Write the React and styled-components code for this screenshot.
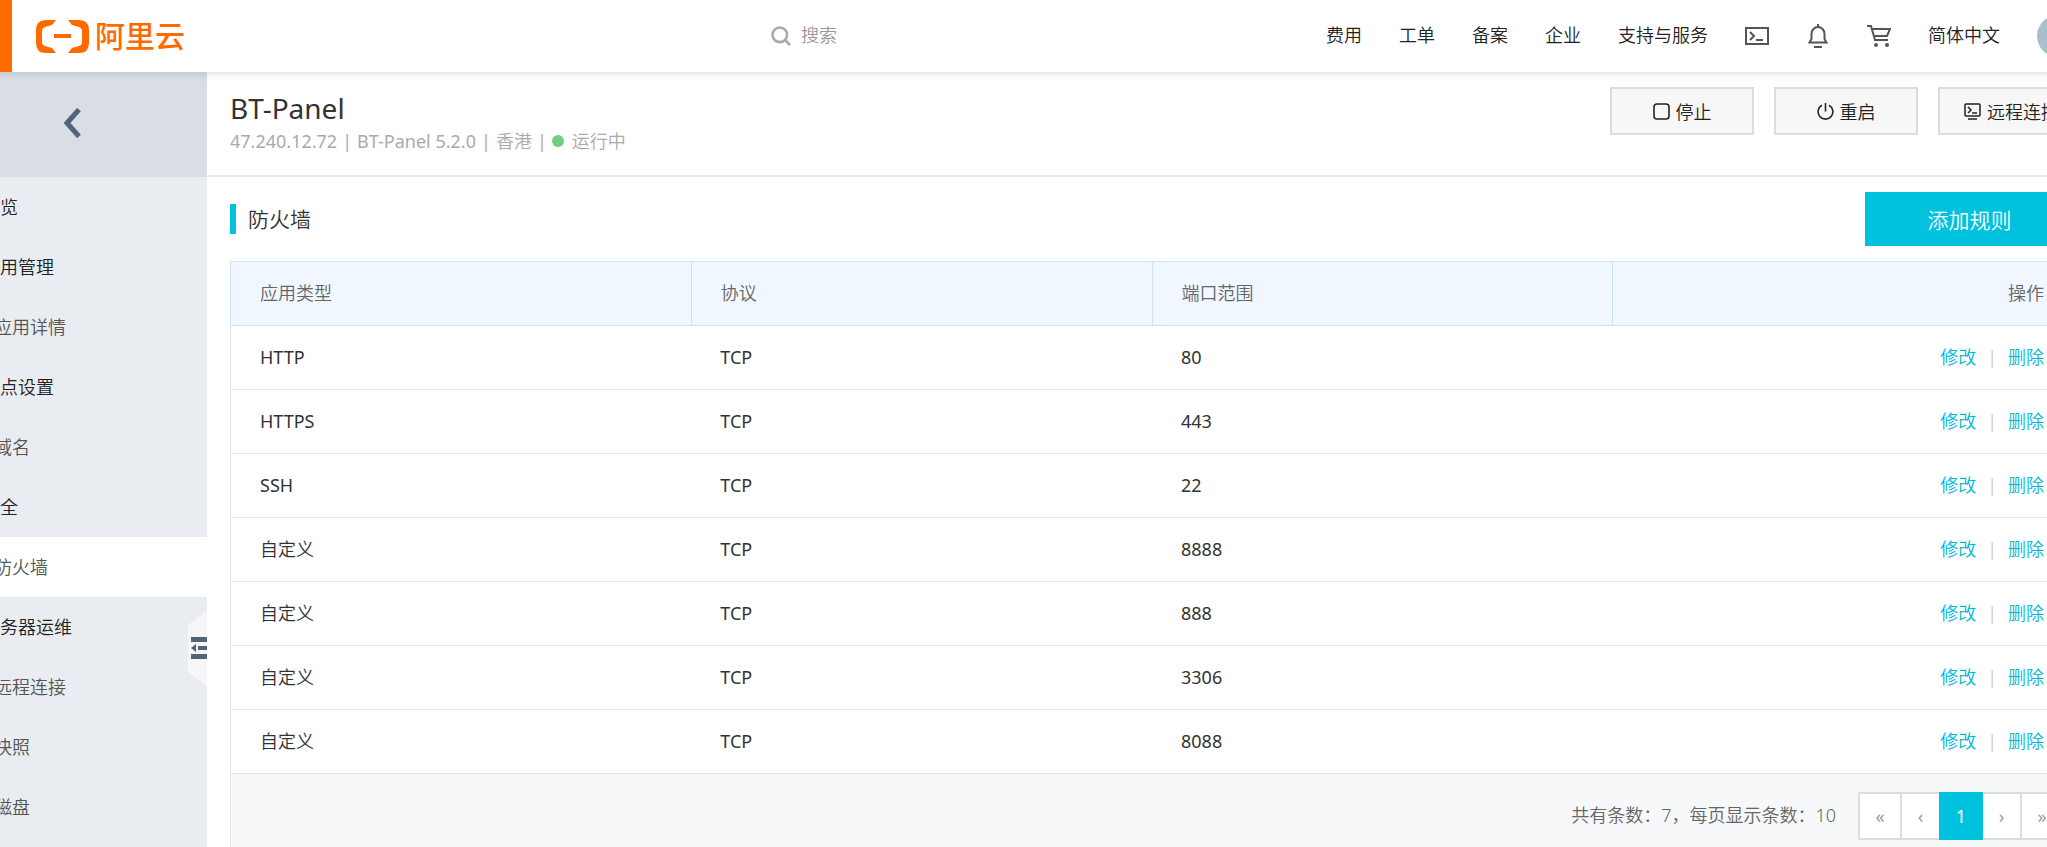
import React from "react";
import styled, { createGlobalStyle } from "styled-components";

const Global = createGlobalStyle`
  * { box-sizing: border-box; }
  html, body { margin: 0; background: #fff; overflow-x: hidden; }
  body, button, input { font-family: "Noto Sans", "Noto Sans CJK SC", sans-serif; font-size: 18px; font-weight: 350; }
  body { color: #333; line-height: 24px; height: 100vh; overflow: hidden; }
  a { color: inherit; text-decoration: none; }
  ul { list-style: none; margin: 0; padding: 0; }
  button { cursor: pointer; }
  svg { display: block; flex: none; }
`;

const Shell = styled.div`
  display: flex;
  flex-direction: column;
  min-height: 100vh;
  margin: 0 -50px 0 -48px;
`;
const TopBar = styled.header`
  display: flex;
  align-items: center;
  height: 72px;
  padding-right: 18px;
  background: #fff;
  box-shadow: 0 1px 8px rgba(0, 0, 0, 0.15);
  z-index: 2;
`;
const MenuButton = styled.button`
  width: 60px;
  height: 72px;
  border: 0;
  background: #ff6a00;
`;
const Logo = styled.a`
  display: flex;
  align-items: center;
  gap: 6px;
  margin-left: 24px;
  color: #ff6a00;
  font-size: 30px;
  font-weight: 500;
  line-height: 36px;
`;
const Search = styled.label`
  display: flex;
  flex: 1;
  align-items: center;
  gap: 10px;
  margin-left: 586px;
  color: #999;
`;
const SearchInput = styled.input`
  width: 200px;
  padding: 0 0 2px;
  border: 0;
  outline: 0;
  background: none;
  &::placeholder { color: #999; opacity: 1; }
`;
const TopNav = styled.nav`
  display: flex;
  align-items: center;
  gap: 37px;
  color: #222;
`;
const NavLink = styled.a`
  padding-bottom: 2px;
`;
const IconButton = styled.button`
  display: flex;
  padding: 0;
  border: 0;
  background: none;
  color: #555;
`;
const Avatar = styled.span`
  width: 42px;
  height: 42px;
  border-radius: 50%;
  background: #a7c0cc;
`;
const Body = styled.div`
  display: flex;
  flex: 1;
`;
const Sidebar = styled.aside`
  position: relative;
  flex: none;
  width: 255px;
  background: #e9edf2;
`;
const BackButton = styled.button`
  display: flex;
  align-items: center;
  width: 100%;
  height: 105px;
  padding: 0 0 4px 111px;
  border: 0;
  background: #d9dde4;
  color: #546478;
`;
const SideLink = styled.a`
  display: block;
  height: 60px;
  padding-left: ${(p) => (p.$child ? 42 : 30)}px;
  line-height: 60px;
  color: ${(p) => (p.$child ? "#555" : "#222")};
  background: ${(p) => (p.$active ? "#fff" : "transparent")};
`;
const Collapse = styled.button`
  position: absolute;
  top: 539px;
  right: 0;
  padding: 0;
  border: 0;
  background: none;
`;
const Main = styled.main`
  display: flex;
  flex: 1;
  flex-direction: column;
  min-width: 0;
`;
const PageHead = styled.div`
  display: flex;
  justify-content: space-between;
  height: 105px;
  padding: 15px 12px 0 23px;
  border-bottom: 2px solid #e4e8ec;
`;
const Title = styled.h1`
  margin: 0;
  font-size: 28px;
  font-weight: 400;
  line-height: 42px;
`;
const Meta = styled.div`
  display: flex;
  align-items: center;
  gap: 5px;
  color: #aaa;
  font-weight: 400;
`;
const Status = styled.span`
  display: flex;
  align-items: center;
  gap: 8px;
  font-weight: 350;
`;
const Dot = styled.i`
  width: 12px;
  height: 12px;
  border-radius: 50%;
  background: #6fcf7f;
`;
const Actions = styled.div`
  display: flex;
  gap: 20px;
`;
const ActionButton = styled.button`
  display: flex;
  align-items: center;
  justify-content: center;
  gap: 6px;
  min-width: 144px;
  height: 48px;
  padding: 0 24px;
  border: 2px solid #ddd;
  background: #f7f7f7;
  color: #222;
`;
const Section = styled.section`
  display: flex;
  flex: 1;
  flex-direction: column;
  padding: 15px 23px 0;
`;
const SectionHead = styled.div`
  display: flex;
  align-items: center;
  justify-content: space-between;
  margin-bottom: 15px;
`;
const SectionTitle = styled.h2`
  margin: 0;
  padding-left: 12px;
  border-left: 6px solid #00c1de;
  font-size: 21px;
  font-weight: 350;
  line-height: 30px;
`;
const AddButton = styled.button`
  width: 209px;
  height: 54px;
  border: 0;
  background: #00c1de;
  color: #fff;
  font-size: 21px;
`;
const Table = styled.table`
  width: 100%;
  table-layout: fixed;
  border-collapse: collapse;
`;
const Th = styled.th`
  height: 64px;
  padding: 0 29px 2px;
  border: 1px solid #cce3f9;
  background: #f0f7ff;
  color: #666;
  font-weight: 350;
  text-align: ${(p) => p.$align || "left"};
`;
const Td = styled.td`
  height: 64px;
  padding: 0 29px 2px;
  border-bottom: 1px solid #e1e5e9;
  font-weight: ${(p) => (p.$latin ? 400 : 350)};
  text-align: ${(p) => p.$align || "left"};
  &:first-child { border-left: 1px solid #e1e5e9; }
  &:last-child { border-right: 1px solid #e1e5e9; }
`;
const RowLink = styled.a`
  color: #00b8d8;
`;
const Divider = styled.span`
  margin: 0 11px;
  color: #bbb;
`;
const Footer = styled.div`
  display: flex;
  flex: 1;
  align-items: flex-start;
  justify-content: flex-end;
  gap: 24px;
  padding: 18px 9px 0 0;
  border: solid #e1e5e9;
  border-width: 0 1px;
  background: #f6f8fa;
  color: #666;
`;
const Summary = styled.span`
  line-height: 46px;
`;
const Pager = styled.div`
  display: flex;
`;
const PageButton = styled.button`
  position: relative;
  z-index: ${(p) => (p.$active ? 1 : 0)};
  width: ${(p) => (p.$wide ? 44 : 41)}px;
  height: 48px;
  padding: 0;
  margin-left: -2px;
  border: 2px solid ${(p) => (p.$active ? "#00c1de" : "#ddd")};
  background: ${(p) => (p.$active ? "#00c1de" : "#fff")};
  color: ${(p) => (p.$active ? "#fff" : "#999")};
  font-weight: 400;
`;

const LogoMark = () => (
  <svg width="53" height="33" viewBox="0 0 53 33" fill="#ff6a00">
    <path d="M20 0H10Q0 0 0 10V23Q0 33 10 33H20L16 28L9 26Q6 25 6 22V11Q6 8 9 7L16 5Z" />
    <path d="M32 0H43Q53 0 53 10V23Q53 33 43 33H32L36 28L43 26Q46 25 46 22V11Q46 8 43 7L36 5Z" />
    <rect x="18" y="14" width="17" height="4" />
  </svg>
);
const SearchIcon = () => (
  <svg width="20" height="20" viewBox="0 0 20 20" fill="none" stroke="#aaa" strokeWidth="2.6">
    <circle cx="8.8" cy="8.8" r="7.3" />
    <path d="M14 14l5 5" />
  </svg>
);
const TerminalIcon = () => (
  <svg width="24" height="24" viewBox="0 0 24 24" fill="none" stroke="currentColor" strokeWidth="2">
    <rect x="1" y="4" width="22" height="16" />
    <path d="M5 8l4 4-4 4M11 16h7" />
  </svg>
);
const BellIcon = () => (
  <svg width="24" height="24" viewBox="0 0 24 24" fill="none" stroke="currentColor" strokeWidth="2">
    <path d="M3.500 18.500h17L18.500 15v-5a6.500 7 0 0 0-13 0v5zM12 0v3M8 23h8" />
  </svg>
);
const CartIcon = () => (
  <svg width="24" height="24" viewBox="0 0 24 24" fill="none" stroke="currentColor" strokeWidth="2">
    <path d="M0 2h4l4 14h13M5 5h18l-3 7H7" />
    <circle cx="9" cy="21" r="1" />
    <circle cx="20" cy="21" r="1" />
  </svg>
);
const ChevronIcon = () => (
  <svg width="18" height="30" viewBox="0 0 18 30" fill="none" stroke="currentColor" strokeWidth="5">
    <path d="M16 1.500L4 15l12 13.500" />
  </svg>
);
const CollapseIcon = () => (
  <svg width="19" height="75" viewBox="0 0 19 75">
    <path d="M19 0L0 14v47l19 14z" fill="#f7f7f7" />
    <path d="M3 26h16v5H3zM10 35h9v4h-9zM3 43h16v5H3zM8 33v8l-5-4z" fill="#546478" />
  </svg>
);
const StopIcon = () => (
  <svg width="17" height="17" viewBox="0 0 17 17" fill="none" stroke="currentColor" strokeWidth="1.600">
    <rect x="1" y="1" width="15" height="15" rx="3" />
  </svg>
);
const PowerIcon = () => (
  <svg width="17" height="17" viewBox="0 0 17 17" fill="none" stroke="currentColor" strokeWidth="1.600">
    <path d="M5 2.200a7.400 7.400 0 1 0 7 0M8.500 0v8.500" />
  </svg>
);
const RemoteIcon = () => (
  <svg width="17" height="17" viewBox="0 0 17 17" fill="none" stroke="currentColor" strokeWidth="1.500">
    <rect x="1" y="1" width="15" height="12" rx="1" />
    <path d="M4 4l3 3-3 3M8 10h5M4 16h9" />
  </svg>
);

const sideItems = [
  ["概览"],
  ["应用管理"],
  ["应用详情", true],
  ["站点设置"],
  ["域名", true],
  ["安全"],
  ["防火墙", true, true],
  ["服务器运维"],
  ["远程连接", true],
  ["快照", true],
  ["磁盘", true],
];
const rules = [
  ["HTTP", "TCP", "80"],
  ["HTTPS", "TCP", "443"],
  ["SSH", "TCP", "22"],
  ["自定义", "TCP", "8888"],
  ["自定义", "TCP", "888"],
  ["自定义", "TCP", "3306"],
  ["自定义", "TCP", "8088"],
];

export default function App() {
  return (
    <>
      <Global />
      <Shell lang="zh-CN">
        <TopBar>
          <MenuButton aria-label="菜单" />
          <Logo href="#"><LogoMark />阿里云</Logo>
          <Search>
            <SearchIcon />
            <SearchInput type="search" placeholder="搜索" aria-label="搜索" />
          </Search>
          <TopNav>
            {["费用", "工单", "备案", "企业", "支持与服务"].map((t) => (
              <NavLink href="#" key={t}>{t}</NavLink>
            ))}
            <IconButton aria-label="命令行"><TerminalIcon /></IconButton>
            <IconButton aria-label="通知"><BellIcon /></IconButton>
            <IconButton aria-label="购物车"><CartIcon /></IconButton>
            <NavLink href="#">简体中文</NavLink>
            <Avatar />
          </TopNav>
        </TopBar>
        <Body>
          <Sidebar>
            <BackButton aria-label="返回"><ChevronIcon /></BackButton>
            <ul>
              {sideItems.map(([label, child, active]) => (
                <li key={label}>
                  <SideLink href="#" $child={child} $active={active}>{label}</SideLink>
                </li>
              ))}
            </ul>
            <Collapse aria-label="收起"><CollapseIcon /></Collapse>
          </Sidebar>
          <Main>
            <PageHead>
              <div>
                <Title>BT-Panel</Title>
                <Meta>
                  <span>47.240.12.72</span><span>|</span>
                  <span>BT-Panel 5.2.0</span><span>|</span>
                  <Status>香港</Status><span>|</span>
                  <Status><Dot />运行中</Status>
                </Meta>
              </div>
              <Actions>
                <ActionButton><StopIcon />停止</ActionButton>
                <ActionButton><PowerIcon />重启</ActionButton>
                <ActionButton><RemoteIcon />远程连接</ActionButton>
              </Actions>
            </PageHead>
            <Section>
              <SectionHead>
                <SectionTitle>防火墙</SectionTitle>
                <AddButton>添加规则</AddButton>
              </SectionHead>
              <Table>
                <thead>
                  <tr>
                    <Th>应用类型</Th>
                    <Th>协议</Th>
                    <Th>端口范围</Th>
                    <Th $align="right">操作</Th>
                  </tr>
                </thead>
                <tbody>
                  {rules.map(([type, protocol, port]) => (
                    <tr key={type + port}>
                      <Td $latin={type !== "自定义"}>{type}</Td>
                      <Td $latin>{protocol}</Td>
                      <Td $latin>{port}</Td>
                      <Td $align="right">
                        <RowLink href="#">修改</RowLink>
                        <Divider>|</Divider>
                        <RowLink href="#">删除</RowLink>
                      </Td>
                    </tr>
                  ))}
                </tbody>
              </Table>
              <Footer>
                <Summary>共有条数：7，每页显示条数：10</Summary>
                <Pager>
                  <PageButton $wide aria-label="首页">«</PageButton>
                  <PageButton aria-label="上一页">‹</PageButton>
                  <PageButton $wide $active>1</PageButton>
                  <PageButton aria-label="下一页">›</PageButton>
                  <PageButton $wide aria-label="末页">»</PageButton>
                </Pager>
              </Footer>
            </Section>
          </Main>
        </Body>
      </Shell>
    </>
  );
}
